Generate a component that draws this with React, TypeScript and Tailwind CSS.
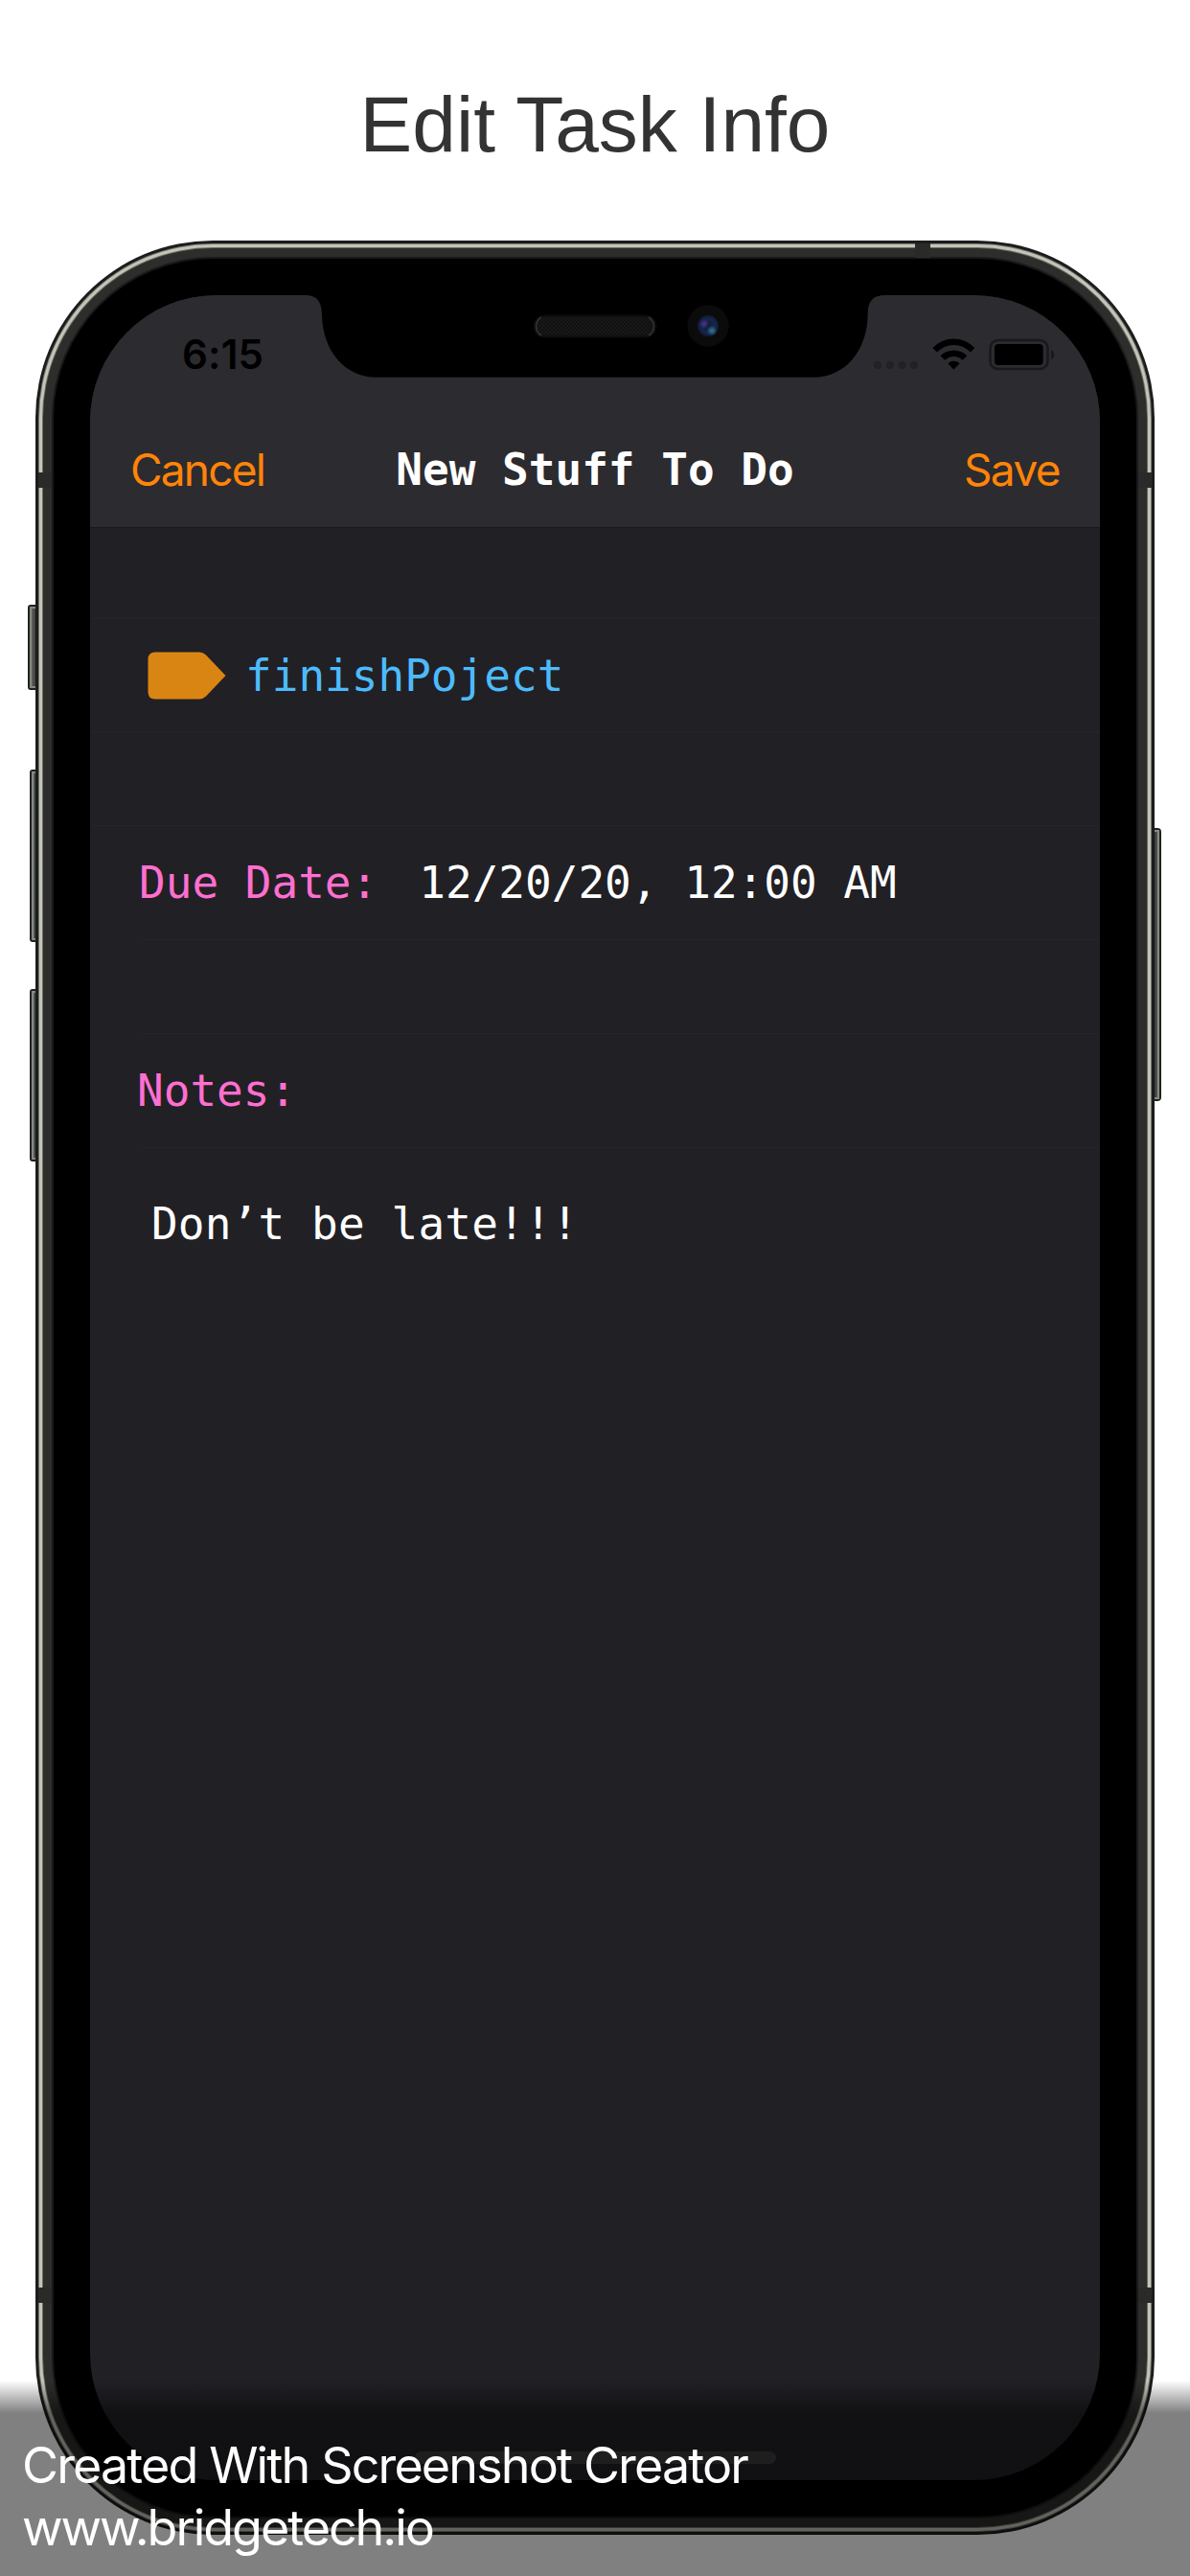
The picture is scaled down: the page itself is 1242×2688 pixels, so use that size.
import React from "react";

const mono = "font-['DejaVu_Sans_Mono',monospace] text-[46px] leading-[54px] whitespace-pre";
const sans = "font-['Inter',sans-serif]";

function SideButton({ side, className }: { side: "left" | "right"; className: string }) {
  return (
    <div
      className={
        "absolute border-2 border-[#20221f] " +
        (side === "left" ? "rounded-l-[3px] " : "rounded-r-[4px] ") +
        className
      }
    >
      <div
        className={
          "h-full w-full border-y-2 border-[#858a80] " +
          (side === "left"
            ? "border-l-2 bg-linear-to-r from-[#62665f] to-[#3a3c38]"
            : "border-r-2 bg-linear-to-l from-[#55574f] to-[#2c2d2a]")
        }
      />
    </div>
  );
}

function Notch() {
  return (
    <svg className="absolute left-[222px] -top-px" width="610" height="88" viewBox="316 307 610 88">
      <path
        d="M316 307V308H318C331 308 335 314 336 327C336 366 360 393.700 393 393.700H849C882 393.700 905.700 366 905.700 327C906 314 911 308 924 308H926V307Z"
        fill="#000"
      />
      <defs>
        <pattern id="mesh" width="4" height="4" patternUnits="userSpaceOnUse">
          <rect width="4" height="4" fill="#101010" />
          <path d="M0 0L4 4M4 0L0 4" stroke="#191919" strokeWidth="1" />
        </pattern>
        <radialGradient id="lens">
          <stop offset="0" stopColor="#121b30" />
          <stop offset="0.65" stopColor="#15274a" />
          <stop offset="1" stopColor="#101a35" />
        </radialGradient>
        <radialGradient id="violet">
          <stop offset="0" stopColor="#57309a" />
          <stop offset="1" stopColor="#57309a" stopOpacity="0" />
        </radialGradient>
        <radialGradient id="cyan">
          <stop offset="0" stopColor="#34799f" />
          <stop offset="1" stopColor="#34799f" stopOpacity="0" />
        </radialGradient>
      </defs>
      <rect x="557.500" y="329.500" width="127" height="22" rx="11" fill="url(#mesh)" stroke="#0c0c0c" strokeWidth="2" />
      <path d="M565 331A11 11 0 0 0 565 350M677 331A11 11 0 0 1 677 350" fill="none" stroke="#343434" strokeWidth="1.500" />
      <circle cx="739" cy="340" r="21.700" fill="#0b0b0c" />
      <circle cx="739" cy="340" r="11" fill="url(#lens)" />
      <circle cx="735" cy="338" r="5" fill="url(#violet)" />
      <circle cx="743" cy="345" r="5.500" fill="url(#cyan)" />
    </svg>
  );
}

function StatusIcons() {
  return (
    <svg className="mt-[43px]" width="192" height="36" viewBox="910 351 192 36">
      {[916, 929, 941.5, 954].map((x) => (
        <circle key={x} cx={x} cy="381" r="4.200" fill="#222125" />
      ))}
      <path d="M973.500 363A30 30 0 0 1 1017.300 363L1013 367.600A24 24 0 0 0 977.800 367.600Z" fill="#000" />
      <path d="M981.500 371.200A19.600 19.600 0 0 1 1009.300 371.200L1004.600 375.800A13 13 0 0 0 986.200 375.800Z" fill="#000" />
      <path d="M989.200 379.300A9 9 0 0 1 1001.600 379.300L995.400 385.600Z" fill="#000" />
      <rect x="1033.500" y="355" width="60" height="30" rx="8" fill="none" stroke="#19191b" strokeWidth="2.500" />
      <rect x="1038" y="359" width="50.700" height="22" rx="4" fill="#000" />
      <path d="M1097 365C1101.300 367 1101.300 373.500 1097 375.500Z" fill="#19191b" />
    </svg>
  );
}

function NavBar() {
  return (
    <header className="flex h-[243px] flex-col border-b border-[#19191c] bg-[#2c2b30]">
      <div className="flex h-[122px] justify-between pl-[96px] pr-[46px]">
        <div className={sans + " mt-[37px] text-[42px] leading-[50px] font-semibold tracking-[0.2px] text-black"}>6:15</div>
        <StatusIcons />
      </div>
      <div className="grid h-[120px] grid-cols-[1fr_auto_1fr] items-center px-[42px]">
        <div className={sans + " text-[46px] leading-[54px] tracking-[-1.8px] text-[#ff8408]"}>Cancel</div>
        <h1 className={mono + " font-bold text-white"}>New Stuff To Do</h1>
        <div className={sans + " text-right text-[46px] leading-[54px] tracking-[-1.6px] text-[#ff8408]"}>Save</div>
      </div>
    </header>
  );
}

function Form() {
  return (
    <main className="flex flex-col">
      <div className="h-[94px]" />
      <div className="flex h-[119px] items-center gap-[20px] border-y border-[#252429] pl-[60px]">
        <svg width="82" height="50" viewBox="0 0 82 50">
          <path d="M8 .5H54Q58 .5 61 3.500L81.500 25L61 46.500Q58 49.500 54 49.500H8Q.5 49.500 .5 42V8Q.5 .5 8 .5Z" fill="#d98514" />
        </svg>
        <div className={mono + " text-[#4dbbfb]"}>finishPoject</div>
      </div>
      <div className="h-[98px] border-b border-[#252429]" />
      <div className="flex h-[118px] items-center pl-[51px]">
        <div className={mono + " text-[#ff6fd0]"}>Due Date:</div>
        <div className={mono + " ml-[43px] text-white"}>12/20/20, 12:00 AM</div>
      </div>
      <div className="ml-[52px] h-[99px] border-y border-[#252429]" />
      <div className="flex h-[118px] items-center pl-[49px]">
        <div className={mono + " text-[#ff6fd0]"}>Notes:</div>
      </div>
      <div className="ml-[52px] border-t border-[#252429] pt-[52px] pl-[12px]">
        <div className={mono + " tracking-[0.15px] text-white"}>Don’t be late!!!</div>
      </div>
    </main>
  );
}

function Phone() {
  return (
    <div className="relative ml-[37px] h-[2394px] w-[1168px]">
      <SideButton side="left" className="top-[380px] -left-[8px] h-[89px] w-[10px]" />
      <SideButton side="left" className="top-[552px] -left-[6px] h-[180px] w-[8px]" />
      <SideButton side="left" className="top-[781px] -left-[6px] h-[180px] w-[8px]" />
      <SideButton side="right" className="top-[613px] -right-[7px] h-[285px] w-[10px]" />
      <div className="relative h-full rounded-[185px] bg-[#1b1c1d] p-[3px]">
        <div className="h-full rounded-[182px] bg-[#77786f] p-px">
          <div className="h-full rounded-[181px] bg-[#c3c5b8] p-[3px]">
            <div className="h-full rounded-[178px] bg-[#6d6e66] p-px">
              <div className="h-full rounded-[177px] bg-[#2d2d2b] p-[9px]">
                <div className="h-full rounded-[168px] bg-[#191919] p-[2px]">
                  <div className="h-full rounded-[166px] bg-black p-[38px]">
                    <div className="relative h-full w-full overflow-hidden rounded-[132px] bg-[#212025]">
                      <NavBar />
                      <Form />
                      <div className="absolute bottom-[17px] left-[339px] h-[13px] w-[377px] rounded-full bg-[#3b3b3d]" />
                      <Notch />
                    </div>
                  </div>
                </div>
              </div>
            </div>
          </div>
        </div>
      </div>
      <div className="absolute top-[3px] left-[918px] h-[15px] w-[16px] bg-[#2a2a28]" />
      <div className="absolute top-[242px] left-[3px] h-[16px] w-[14px] bg-[#2a2a28]" />
      <div className="absolute top-[242px] right-[3px] h-[16px] w-[14px] bg-[#2a2a28]" />
      <div className="absolute top-[2136px] left-[3px] h-[16px] w-[14px] bg-[#2a2a28]" />
      <div className="absolute top-[2136px] right-[3px] h-[16px] w-[14px] bg-[#2a2a28]" />
    </div>
  );
}

export default function App() {
  return (
    <div className="relative h-[2688px] w-[1242px] overflow-hidden bg-white">
      <div className="flex h-[251px] items-start justify-center pt-[84px] font-['Liberation_Sans',sans-serif] text-[82px] leading-[92px] text-[#333333]">
        Edit Task Info
      </div>
      <Phone />
      <div className="absolute inset-x-0 bottom-0 h-[204px] bg-linear-to-b from-black/0 to-black/50 to-[34px]">
        <div className={sans + " pt-[56px] pl-[23px] text-[52px] leading-[65px] whitespace-nowrap text-white"}>
          <div className="tracking-[-1.85px]">Created With Screenshot Creator</div>
          <div className="tracking-[-2.05px]">www.bridgetech.io</div>
        </div>
      </div>
    </div>
  );
}
